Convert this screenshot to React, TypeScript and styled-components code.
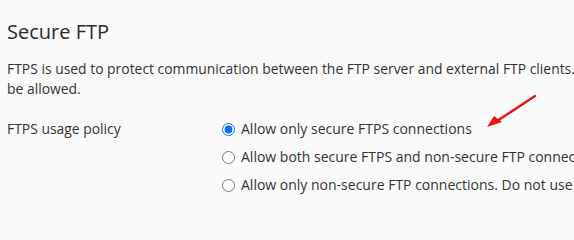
import styled, { createGlobalStyle } from "styled-components";

const GlobalStyle = createGlobalStyle`
    html, body {
        margin: 0;
        padding: 0;
        background: #fafafa;
        overflow: hidden;
    }
    body {
        font-family: "Open Sans", "Liberation Sans", sans-serif;
        color: #333333;
    }
`;

const options = [
    "Allow only secure FTPS connections",
    "Allow both secure FTPS and non-secure FTP connections",
    "Allow only non-secure FTP connections. Do not use FTPS.",
];

export default function App(): JSX.Element {
    return (
        <>
            <GlobalStyle />
            <Section>
                <Title>Secure FTP</Title>
                <Intro>
                    FTPS is used to protect communication between the FTP server and external FTP clients. Specify whether non-secure FTP connections should
                    <br />
                    be allowed.
                </Intro>
                <FieldRow>
                    <FieldLabel>FTPS usage policy</FieldLabel>
                    <Options>
                        {options.map((text, idx) => (
                            <Option key={text}>
                                <Radio type="radio" name="ftps" defaultChecked={idx === 0} />
                                <span>{text}</span>
                                {idx === 0 && (
                                    <Arrow width="60" height="40" viewBox="0 0 60 40">
                                        <line x1="50" y1="5" x2="12" y2="30" stroke="#ee1111" strokeWidth="2.4" strokeLinecap="round" />
                                        <polygon points="2,36 9,25 17,31" fill="#ee1111" />
                                    </Arrow>
                                )}
                            </Option>
                        ))}
                    </Options>
                </FieldRow>
            </Section>
        </>
    );
}

const Section = styled.div`
    width: 1100px;
    padding: 18px 7px 0;
`;

const Title = styled.h2`
    margin: 0;
    font-size: 20px;
    font-weight: 400;
    line-height: 28px;
    color: #2b2b2b;
`;

const Intro = styled.p`
    margin: 13px 0 0;
    font-size: 13.9px;
    line-height: 20px;
    white-space: nowrap;
`;

const FieldRow = styled.div`
    display: flex;
    margin-top: 18px;
`;

const FieldLabel = styled.div`
    width: 215px;
    font-size: 13.9px;
    line-height: 20px;
    padding-top: 2px;
`;

const Options = styled.div`
    display: flex;
    flex-direction: column;
    gap: 4px;
`;

const Option = styled.label`
    position: relative;
    display: flex;
    align-items: center;
    gap: 6px;
    font-size: 14px;
    line-height: 24px;
    white-space: nowrap;
`;

const Radio = styled.input`
    margin: 0;
    width: 13px;
    height: 13px;
    accent-color: #0a6cff;
`;

const Arrow = styled.svg`
    position: absolute;
    left: 263px;
    top: -26px;
`;
